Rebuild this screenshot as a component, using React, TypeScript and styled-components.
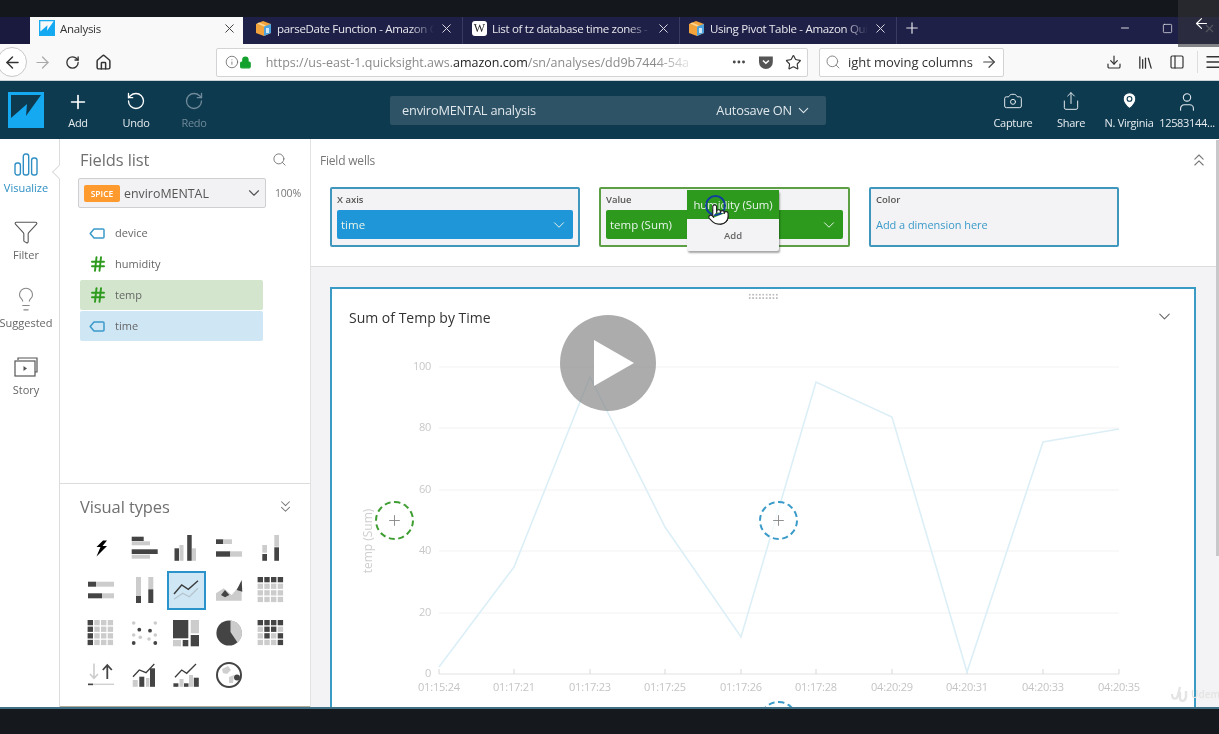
import React from 'react';
import styled, { createGlobalStyle } from 'styled-components';
import {
  ArrowLeft,
  ArrowRight,
  Camera,
  ChevronDown,
  ChevronsDown,
  ChevronsUp,
  Download,
  Ellipsis,
  Funnel,
  Hash,
  House,
  Info,
  Library,
  Lightbulb,
  Lock,
  MapPin,
  Menu,
  Minus,
  PanelLeft,
  Plus,
  Pointer,
  RotateCcw,
  RotateCw,
  Search,
  Share,
  Square,
  Star,
  User,
  X,
} from 'lucide-react';

const FONT = '"Open Sans", "Noto Sans", sans-serif';
const DARK = '#444';
const LIGHT = '#ccc';

const GlobalStyle = createGlobalStyle`
  html, body {
    margin: 0;
    padding: 0;
    background: #15191e;
    overflow: hidden;
  }
  * {
    box-sizing: border-box;
  }
`;

type Block = [number, number, number, number, string];

const blocks = (list: Block[]) =>
  list.map(([x, y, w, h, fill], i) => <rect key={i} x={x} y={y} width={w} height={h} fill={fill} />);

const gridCells = (pattern: string[]) => {
  const list: Block[] = [];
  pattern.forEach((row, r) => {
    row.split('').forEach((c, k) => {
      list.push([-13.4 + k * 6.7, -13 + r * 6.6, 5.4, 5.3, c === 'd' ? DARK : LIGHT]);
    });
  });
  return blocks(list);
};

const visualIcons: React.ReactNode[] = [
  <path d="M2 -7.5 L-4.5 -1 L-0.5 -1 L-4.5 8.5 L6 -2 L1.5 -2 L6 -7.5Z" fill="#000" />,
  blocks([
    [-12.3, -11.3, 12, 4.3, DARK],
    [-12.3, -6.7, 18.3, 4, LIGHT],
    [-12.3, 1.3, 26, 4.7, DARK],
    [-12.3, 6.7, 18.3, 4, LIGHT],
  ]),
  blocks([
    [-11.5, 0.3, 4.5, 12.5, DARK],
    [-6.5, -3, 4, 15.8, LIGHT],
    [1.2, -13, 4.5, 25.8, DARK],
    [6, 0.3, 4, 12.5, LIGHT],
  ]),
  blocks([
    [-13, -8.7, 7.3, 4.7, DARK],
    [-5.7, -8.7, 8.7, 4.7, LIGHT],
    [-13, 3.3, 14.3, 5.4, DARK],
    [1.3, 3.3, 11.7, 5.4, LIGHT],
  ]),
  blocks([
    [-8.7, -3, 4.7, 7.7, LIGHT],
    [-8.7, 6, 4.7, 6.8, DARK],
    [3.3, -13, 4.7, 11.7, LIGHT],
    [3.3, -0.7, 4.7, 13.5, DARK],
  ]),
  blocks([
    [-13, -8.3, 8, 5, DARK],
    [-5, -8.3, 18, 5, LIGHT],
    [-13, 3.3, 14, 5, DARK],
    [1, 3.3, 12, 5, LIGHT],
  ]),
  blocks([
    [-8, -13, 5, 19, LIGHT],
    [-8, 6, 5, 7, DARK],
    [4.3, -13, 5, 12.3, LIGHT],
    [4.3, -0.7, 5, 13.7, DARK],
  ]),
  <>
    <polyline points="-12,9.3 -3.3,3.3 3.3,6.7 12,-1.7" fill="none" stroke="#b5c4cc" strokeWidth="1.2" />
    <polyline points="-12,4 -4.3,-5 2.3,-0.7 12,-9.3" fill="none" stroke="#3c3c3c" strokeWidth="1.4" />
  </>,
  <>
    <polygon points="-13,10.7 -13,3.3 -5.3,-1.7 2.7,5 12.7,-6.7 12.7,10.7" fill={LIGHT} />
    <polygon points="-8,5 -4,0 0.3,5 -4,7.3" fill={DARK} />
    <polygon points="7.7,0 12.7,-10 13.3,1.7" fill={DARK} />
  </>,
  gridCells(['dddd', 'llll', 'llll', 'llll']),
  gridCells(['dlll', 'dlll', 'dlll', 'dlll']),
  <>
    {[[-4.7, -3.3], [6, -2.3], [-10.3, 10], [11.3, 10]].map(([x, y], i) => (
      <circle key={i} cx={x} cy={y} r="1.9" fill={DARK} />
    ))}
    {[[-10.3, -10], [11.3, -10], [-3.7, 4.3], [5, 6], [-10.3, 2], [11.3, 2]].map(([x, y], i) => (
      <circle key={i} cx={x} cy={y} r="1.8" fill={LIGHT} />
    ))}
  </>,
  blocks([
    [-13, -13, 15.3, 18.3, DARK],
    [4.7, -13, 8.3, 13.3, LIGHT],
    [4.7, 2, 8.3, 11.3, DARK],
    [-13, 7, 8, 6.3, LIGHT],
    [-3.3, 7, 5.6, 6.3, DARK],
  ]),
  <>
    <circle cx="0" cy="0" r="12.6" fill={DARK} />
    <path d="M1.5 -1 L1.5 -12.6 A12.6 12.6 0 0 1 8.5 9.5 Z" fill={LIGHT} />
  </>,
  gridCells(['dddd', 'lddl', 'ldld', 'llld']),
  <>
    <path d="M-7 -11.5 V3 M-11 -1 L-7 3.4 L-3 -1" fill="none" stroke={LIGHT} strokeWidth="1.6" />
    <path d="M6.3 4 V-10 M1.8 -5 L6.3 -10 L10.8 -5" fill="none" stroke={DARK} strokeWidth="1.8" />
    {blocks([
      [-13, 8.6, 26, 1.3, LIGHT],
      [-13, 8.6, 5, 1.6, DARK],
    ])}
  </>,
  <>
    {blocks([
      [-11.3, 5, 5, 6.8, LIGHT],
      [-4.7, 1.7, 5, 10.1, DARK],
      [2, 3, 3.4, 8.8, LIGHT],
      [6, -6.7, 5, 18.5, DARK],
    ])}
    <polyline points="-11,1.7 -4.7,-5 2,-2.3 10.3,-11" fill="none" stroke="#3c3c3c" strokeWidth="1.3" />
  </>,
  <>
    {blocks([
      [-12.6, 8.3, 5, 3.5, DARK],
      [-6.5, 4, 4, 7.8, LIGHT],
      [-2, 8.3, 4.5, 3.5, DARK],
      [3, 0, 4, 11.8, LIGHT],
      [7.8, 2.7, 5, 9.1, DARK],
    ])}
    <polyline points="-11,2.3 -4.3,-5 0.7,-1.7 10,-11" fill="none" stroke="#3c3c3c" strokeWidth="1.3" />
  </>,
  <>
    <path d="M-7 -6 L-1 -9 L2 -5 L-2 -1 L-6 -2Z M0 2 L5 0 L4 8 L0 8Z" fill="#cfcfcf" />
    <circle cx="0" cy="0" r="12" fill="none" stroke={DARK} strokeWidth="2" />
    <circle cx="8" cy="2.5" r="3" fill={DARK} />
  </>,
];

const CUBE = (
  <svg width="17" height="17" viewBox="0 0 17 17">
    <path d="M1 4 L8 1 L16 4 L16 13 L9 16 L1 13Z" fill="#f2a33c" />
    <path d="M9 6.5 L16 4 L16 13 L9 16Z" fill="#4da3dd" />
    <path d="M4 2.6 L11 5.4 L9 6.5 L2 3.6Z" fill="#fbd694" />
    <rect x="11" y="8" width="3" height="5" fill="#cfe8f8" />
  </svg>
);

const QS_MARK = (size: number, border: string, dark: string) => (
  <svg width={size} height={size} viewBox="0 0 36 36">
    <rect x="0.5" y="0.5" width="35" height="35" rx="1" fill="#14a9f0" />
    <path d="M3 3 H33 L18 24 L19 12 L3 26Z" fill={dark} />
    <rect x="1" y="1" width="34" height="34" fill="none" stroke={border} strokeWidth="2" />
  </svg>
);

const TagIcon = () => (
  <svg width="16" height="11" viewBox="0 0 16 11">
    <path
      d="M5 1H14a1 1 0 0 1 1 1V9a1 1 0 0 1-1 1H5L1.2 5.5Z"
      fill="none"
      stroke="#3b9ac9"
      strokeWidth="1.5"
      strokeLinejoin="round"
    />
  </svg>
);

const VisualizeIcon = () => (
  <svg width="24" height="23" viewBox="0 0 24 23" fill="none" stroke="#2f8fc4" strokeWidth="1.4">
    <rect x="1" y="10" width="5.4" height="12" rx="2.2" />
    <rect x="9.3" y="1" width="5.4" height="21" rx="2.2" />
    <rect x="17.6" y="5" width="5.4" height="17" rx="2.2" />
  </svg>
);

const StoryIcon = () => (
  <svg width="24" height="20" viewBox="0 0 24 20" fill="none" stroke="#555" strokeWidth="1.2">
    <path d="M4 3 V1 H23 V15 H21" />
    <rect x="1" y="4" width="20" height="15" />
    <path d="M9.5 9 L13 11.5 L9.5 14Z" fill="#555" stroke="none" />
  </svg>
);

const CHART_X = [439, 514, 590, 665, 741, 816, 892, 967, 1043, 1119];
const CHART_LABELS = [
  '01:15:24',
  '01:17:21',
  '01:17:23',
  '01:17:25',
  '01:17:26',
  '01:17:28',
  '04:20:29',
  '04:20:31',
  '04:20:33',
  '04:20:35',
];
const CHART_Y = [667, 567, 377, 527, 637, 382, 417, 672, 442, 429];
const GRID = [
  { y: 367, label: '100' },
  { y: 428, label: '80' },
  { y: 490, label: '60' },
  { y: 551, label: '40' },
  { y: 613, label: '20' },
  { y: 674, label: '0' },
];

const LineChart = () => (
  <ChartSvg viewBox="332 340 862 367">
    {GRID.map((g) => (
      <g key={g.y}>
        {g.y !== 674 && <line x1="439" x2="1119" y1={g.y} y2={g.y} stroke="#f2f2f4" strokeWidth="1" />}
        <text x="431" y={g.y + 3} textAnchor="end" fontSize="11" letterSpacing="-0.3" fill="#c8c8c8" fontFamily={FONT}>
          {g.label}
        </text>
      </g>
    ))}
    <line x1="439" x2="1119" y1="674" y2="674" stroke="#e2e2e4" strokeWidth="1" />
    {CHART_X.map((x, i) => (
      <g key={x}>
        <line x1={x} x2={x} y1="669" y2="674" stroke="#d8d8da" strokeWidth="1" />
        <text x={x} y="691" textAnchor="middle" fontSize="11" letterSpacing="-0.2" fill="#c4c4c4" fontFamily={FONT}>
          {CHART_LABELS[i]}
        </text>
      </g>
    ))}
    <polyline
      points={CHART_X.map((x, i) => `${x},${CHART_Y[i]}`).join(' ')}
      fill="none"
      stroke="#dceff7"
      strokeWidth="1.6"
    />
    <text
      transform="translate(372 541) rotate(-90)"
      textAnchor="middle"
      fontSize="12"
      fill="#cfcfcf"
      fontFamily={FONT}
    >
      temp (Sum)
    </text>
  </ChartSvg>
);

const tabs = [
  { title: 'parseDate Function - Amazon Quick', wiki: false, width: 220, pad: 12 },
  { title: 'List of tz database time zones - Wikipedia', wiki: true, width: 217, pad: 9 },
  { title: 'Using Pivot Table - Amazon QuickSight', wiki: false, width: 217, pad: 8 },
];

const fields = [
  { name: 'device', kind: 'tag', tone: 'none' },
  { name: 'humidity', kind: 'hash', tone: 'none' },
  { name: 'temp', kind: 'hash', tone: 'green' },
  { name: 'time', kind: 'tag', tone: 'blue' },
] as const;

const App: React.FC = () => {
  return (
    <Page>
      <GlobalStyle />
      <TopStrip />
      <TabBar>
        <TabLead />
        <ActiveTab>
          {QS_MARK(16, '#14a9f0', '#f9f9fa')}
          <ActiveTabTitle>Analysis</ActiveTabTitle>
          <X size={15} color="#444" strokeWidth={1.6} />
        </ActiveTab>
        {tabs.map((t) => (
          <Tab key={t.title} $width={t.width} $pad={t.pad}>
            {t.wiki ? <WikiIcon>W</WikiIcon> : CUBE}
            <TabTitle>{t.title}</TabTitle>
            <X size={15} color="#d8d8e0" strokeWidth={1.6} />
          </Tab>
        ))}
        <NewTab>
          <Plus size={18} color="#e4e4ea" strokeWidth={1.6} />
        </NewTab>
        <WindowControls>
          <Minus size={12} color="#d8d8e0" />
          <Square size={11} color="#e8e8ee" strokeWidth={1.6} />
          <X size={13} color="#8a8a95" />
        </WindowControls>
      </TabBar>
      <NavBar>
        <BackCircle>
          <ArrowLeft size={19} color="#333" strokeWidth={1.8} />
        </BackCircle>
        <NavButton>
          <ArrowRight size={19} color="#aaa" strokeWidth={1.5} />
        </NavButton>
        <NavButton>
          <RotateCw size={15} color="#333" strokeWidth={2.1} />
        </NavButton>
        <NavButton>
          <House size={17} color="#333" strokeWidth={2.1} />
        </NavButton>
        <UrlBar>
          <Info size={14} color="#666" strokeWidth={1.4} />
          <Lock size={13} color="#12a12c" fill="#12a12c" strokeWidth={2} />
          <UrlText>
            https://us-east-1.quicksight.aws.<b>amazon.com</b>/sn/analyses/dd9b7444-54a
          </UrlText>
          <Ellipsis size={16} color="#444" strokeWidth={2.4} />
          <PocketIcon viewBox="0 0 16 16">
            <path d="M1 2.5h14v5.5a7 7 0 0 1-14 0Z" fill="#555" />
            <path d="M5 6.5l3 2.8 3-2.8" fill="none" stroke="#fff" strokeWidth="1.6" />
          </PocketIcon>
          <Star size={17} color="#333" strokeWidth={1.6} />
        </UrlBar>
        <SearchBar>
          <Search size={16} color="#888" strokeWidth={1.5} />
          <SearchText>ight moving columns</SearchText>
          <ArrowRight size={18} color="#444" strokeWidth={1.6} />
        </SearchBar>
        <ToolGroup>
          <Download size={16} color="#333" strokeWidth={1.8} />
          <Library size={17} color="#333" strokeWidth={1.8} />
          <PanelLeft size={16} color="#333" strokeWidth={1.8} />
          <ToolDivider />
          <Menu size={18} color="#333" strokeWidth={1.8} />
        </ToolGroup>
      </NavBar>
      <AppBar>
        <LogoSlot>{QS_MARK(36, '#14a9f0', '#0e3a50')}</LogoSlot>
        <Action>
          <Plus size={22} color="#fff" strokeWidth={1.8} />
          Add
        </Action>
        <Action>
          <RotateCcw size={20} color="#fff" strokeWidth={1.6} />
          Undo
        </Action>
        <Action $muted>
          <RotateCw size={20} color="#6f8a98" strokeWidth={1.6} />
          Redo
        </Action>
        <TitleBar>
          <span>enviroMENTAL analysis</span>
          <Autosave>
            Autosave ON
            <ChevronDown size={17} strokeWidth={1.5} />
          </Autosave>
        </TitleBar>
        <RightActions>
          <Action $wide>
            <Camera size={20} color="#dfe7eb" strokeWidth={1.2} />
            Capture
          </Action>
          <Action $wide>
            <Share size={20} color="#dfe7eb" strokeWidth={1.2} />
            Share
          </Action>
          <Action $wide>
            <MapPin size={19} color="#0e3a50" fill="#fff" strokeWidth={1.4} />
            N. Virginia
          </Action>
          <Action $wide>
            <User size={22} color="#dfe7eb" strokeWidth={1.2} />
            12583144...
          </Action>
        </RightActions>
      </AppBar>
      <Workspace>
        <Rail>
          <RailNotch />
          <RailItem $active>
            <RailIcon>
              <VisualizeIcon />
            </RailIcon>
            Visualize
          </RailItem>
          <RailItem>
            <RailIcon>
              <Funnel size={26} color="#555" strokeWidth={1} />
            </RailIcon>
            Filter
          </RailItem>
          <RailItem>
            <RailIcon>
              <Lightbulb size={26} color="#888" strokeWidth={1} />
            </RailIcon>
            Suggested
          </RailItem>
          <RailItem>
            <RailIcon>
              <StoryIcon />
            </RailIcon>
            Story
          </RailItem>
        </Rail>
        <SidePanel>
          <FieldsSection>
            <PanelHead>
              <PanelTitle>Fields list</PanelTitle>
              <Search size={15} color="#777" strokeWidth={1.5} />
            </PanelHead>
            <DatasetRow>
              <DatasetSelect>
                <SpiceBadge>SPICE</SpiceBadge>
                <DatasetName>enviroMENTAL</DatasetName>
                <ChevronDown size={18} color="#555" strokeWidth={1.5} />
              </DatasetSelect>
              <Percent>100%</Percent>
            </DatasetRow>
            <FieldList>
              {fields.map((f) => (
                <FieldRow key={f.name} $tone={f.tone}>
                  <FieldIcon>
                    {f.kind === 'tag' ? <TagIcon /> : <Hash size={18} color="#2e9a1e" strokeWidth={2.6} />}
                  </FieldIcon>
                  {f.name}
                </FieldRow>
              ))}
            </FieldList>
          </FieldsSection>
          <VisualSection>
            <VisualHead>
              <PanelTitle>Visual types</PanelTitle>
              <ChevronsDown size={19} color="#777" strokeWidth={1.3} />
            </VisualHead>
            <VisualGrid>
              {visualIcons.map((icon, i) => (
                <VisualCell key={i} $selected={i === 7}>
                  <svg width="32" height="32" viewBox="-16 -16 32 32">
                    {icon}
                  </svg>
                </VisualCell>
              ))}
            </VisualGrid>
          </VisualSection>
        </SidePanel>
        <Main>
          <ScrollThumb />
          <FieldWells>
            <WellsHead>
              Field wells
              <ChevronsUp size={20} color="#777" strokeWidth={1.3} />
            </WellsHead>
            <WellRow>
              <Well $color="#3f97bd" $width={250}>
                <WellLabel>X axis</WellLabel>
                <WellPill $color="#1f96d8">
                  time
                  <ChevronDown size={18} strokeWidth={1.3} />
                </WellPill>
              </Well>
              <Well $color="#5c9f45" $width={251}>
                <WellLabel>Value</WellLabel>
                <WellPill $color="#2d9a1e">
                  temp (Sum)
                  <ChevronDown size={18} strokeWidth={1.3} />
                </WellPill>
                <DragPopup>
                  <PopupTitle>humidity (Sum)</PopupTitle>
                  <PopupAction>Add</PopupAction>
                  <CursorRing />
                  <CursorHand>
                    <Pointer size={23} color="#222" fill="#fff" strokeWidth={1.2} />
                  </CursorHand>
                </DragPopup>
              </Well>
              <Well $color="#3f97bd" $width={250}>
                <WellLabel>Color</WellLabel>
                <WellHint>Add a dimension here</WellHint>
              </Well>
            </WellRow>
          </FieldWells>
          <Canvas>
            <Card>
              <DragHandle />
              <CardHead>
                Sum of Temp by Time
                <CardMenu>
                  <ChevronDown size={19} color="#666" strokeWidth={1.3} />
                </CardMenu>
              </CardHead>
              <LineChart />
              <DropTarget $color="#3f9e32" $left={43} $top={212}>
                <Plus size={17} color="#888" strokeWidth={1.3} />
              </DropTarget>
              <DropTarget $color="#3a9bc9" $left={427} $top={212}>
                <Plus size={17} color="#888" strokeWidth={1.3} />
              </DropTarget>
              <DropTarget $color="#3a9bc9" $left={427} $top={412} />
            </Card>
          </Canvas>
        </Main>
      </Workspace>
      <Footer />
      <Watermark>
        <svg width="18" height="20" viewBox="0 0 18 20" fill="none" stroke="#e4e4e4" strokeWidth="2.4">
          <path d="M2 10 C2 16 7 16 8 11 L10 3 M10 8 V14 C10 18 15 18 16 13 V7" />
        </svg>
        Udemy
      </Watermark>
      <PlayOverlay>
        <svg width="40" height="46" viewBox="0 0 40 46">
          <polygon points="0,0 40,23 0,46" fill="#fff" />
        </svg>
      </PlayOverlay>
      <BackOverlay>
        <ArrowLeft size={17} color="#fff" strokeWidth={1.6} />
      </BackOverlay>
    </Page>
  );
};

export default App;

const Page = styled.div`
  position: relative;
  width: 1219px;
  height: 734px;
  display: flex;
  flex-direction: column;
  overflow: hidden;
  font-family: ${FONT};
  filter: blur(0.35px);
`;

const TopStrip = styled.div`
  height: 17px;
  flex: none;
  background: #14171c;
`;

const TabBar = styled.div`
  height: 27px;
  flex: none;
  display: flex;
  background: #1f2048;
`;

const TabLead = styled.div`
  width: 30px;
  background: #191a3e;
`;

const ActiveTab = styled.div`
  width: 213px;
  display: flex;
  align-items: center;
  padding: 0 6px 5px 9px;
  background: #f9f9fa;
`;

const ActiveTabTitle = styled.span`
  flex: 1;
  margin-left: 5px;
  font-size: 11.5px;
  letter-spacing: -0.3px;
  color: #333;
`;

const Tab = styled.div<{ $width: number; $pad: number }>`
  width: ${(p) => p.$width}px;
  display: flex;
  align-items: center;
  gap: 5px;
  padding: 0 8px 5px ${(p) => p.$pad}px;
  border-right: 1px solid #3a3b60;
  color: #e8e8ee;
`;

const TabTitle = styled.span`
  flex: 1;
  min-width: 0;
  font-size: 11.5px;
  letter-spacing: -0.3px;
  white-space: nowrap;
  overflow: hidden;
  mask-image: linear-gradient(to right, #000 85%, transparent 100%);
`;

const WikiIcon = styled.span`
  width: 15px;
  height: 15px;
  flex: none;
  display: flex;
  align-items: center;
  justify-content: center;
  border-radius: 3px;
  background: #fff;
  color: #222;
  font-family: 'Liberation Serif', serif;
  font-size: 12px;
`;

const NewTab = styled.div`
  width: 30px;
  padding-bottom: 5px;
  display: flex;
  align-items: center;
  justify-content: center;
`;

const WindowControls = styled.div`
  margin-left: auto;
  width: 100px;
  padding: 0 3px 5px 0;
  display: flex;
  align-items: center;
  justify-content: space-between;
`;

const NavBar = styled.div`
  height: 37px;
  flex: none;
  display: flex;
  align-items: center;
  background: #f9f9fa;
  border-bottom: 1px solid #c9d3d8;
`;

const BackCircle = styled.div`
  width: 30px;
  height: 30px;
  flex: none;
  margin-left: -3px;
  display: flex;
  align-items: center;
  justify-content: center;
  border-radius: 50%;
  background: #fff;
  border: 1px solid #c8c8c8;
`;

const NavButton = styled.div`
  width: 30.5px;
  flex: none;
  display: flex;
  justify-content: center;
`;

const UrlBar = styled.div`
  width: 592px;
  height: 29px;
  flex: none;
  margin-left: 97.5px;
  display: flex;
  align-items: center;
  padding: 0 5px 0 8px;
  background: #fff;
  border: 1px solid #d4d4d6;
  border-radius: 2px;
`;

const UrlText = styled.span`
  width: 432px;
  flex: none;
  margin: 0 33px 0 14px;
  font-size: 12.5px;
  color: #8a8a8a;
  white-space: nowrap;
  overflow: hidden;
  mask-image: linear-gradient(to right, #000 90%, transparent 100%);

  b {
    font-weight: 400;
    color: #222;
  }
`;

const PocketIcon = styled.svg`
  width: 16px;
  height: 16px;
  margin: 0 11px 0 12px;
`;

const SearchBar = styled.div`
  width: 185px;
  height: 29px;
  flex: none;
  margin-left: 11px;
  display: flex;
  align-items: center;
  padding: 0 5px;
  background: #fff;
  border: 1px solid #d4d4d6;
  border-radius: 2px;
`;

const SearchText = styled.span`
  flex: 1;
  margin-left: 7px;
  font-size: 13px;
  letter-spacing: -0.05px;
  color: #333;
  white-space: nowrap;
`;

const ToolGroup = styled.div`
  margin-left: 102px;
  flex: none;
  display: flex;
  align-items: center;
  gap: 15px;
`;

const ToolDivider = styled.div`
  width: 1px;
  height: 22px;
  margin: 0 -9px 0 -3px;
  background: #ddd;
`;

const AppBar = styled.div`
  height: 58px;
  flex: none;
  display: flex;
  align-items: center;
  background: #0e3a50;
`;

const LogoSlot = styled.div`
  width: 36px;
  height: 36px;
  margin: 0 8px;
`;

const Action = styled.div<{ $muted?: boolean; $wide?: boolean }>`
  width: ${(p) => (p.$wide ? '58px' : '52px')};
  margin-right: ${(p) => (p.$wide ? '0' : '6px')};
  height: 39px;
  display: flex;
  flex-direction: column;
  align-items: center;
  justify-content: space-between;
  white-space: nowrap;
  font-size: 11px;
  letter-spacing: -0.3px;
  color: ${(p) => (p.$muted ? '#6f8a98' : '#e6edf0')};
`;

const TitleBar = styled.div`
  width: 436px;
  height: 29px;
  margin-left: 164px;
  display: flex;
  align-items: center;
  justify-content: space-between;
  padding: 0 12px;
  border-radius: 2px;
  background: #2e5266;
  color: #dfe7eb;
  font-size: 12.8px;
  letter-spacing: -0.2px;
`;

const Autosave = styled.span`
  display: flex;
  align-items: center;
  gap: 3px;
  margin-right: 2px;
`;

const RightActions = styled.div`
  margin-left: auto;
  padding-right: 3px;
  display: flex;
`;

const Workspace = styled.div`
  flex: 1;
  min-height: 0;
  display: flex;
  background: #fff;
`;

const Rail = styled.div`
  position: relative;
  width: 60px;
  flex: none;
  padding: 12px 7px 0 0;
  border-right: 1px solid #dcdcdc;
  background: #fff;
`;

const RailNotch = styled.div`
  position: absolute;
  top: 28px;
  right: -5px;
  width: 10px;
  height: 10px;
  transform: rotate(45deg);
  background: #fff;
  border-left: 1px solid #dcdcdc;
  border-bottom: 1px solid #dcdcdc;
`;

const RailItem = styled.div<{ $active?: boolean }>`
  height: 67.5px;
  display: flex;
  flex-direction: column;
  align-items: center;
  font-size: 11px;
  line-height: 14px;
  white-space: nowrap;
  color: ${(p) => (p.$active ? '#2f8fc4' : '#666')};
`;

const RailIcon = styled.div`
  height: 26px;
  margin-bottom: 3.5px;
  display: flex;
  align-items: center;
`;

const SidePanel = styled.div`
  width: 250px;
  flex: none;
  display: flex;
  flex-direction: column;
`;

const FieldsSection = styled.div`
  flex: 1;
  padding: 0 0 0 18px;
`;

const PanelHead = styled.div`
  height: 39px;
  display: flex;
  align-items: center;
  justify-content: space-between;
  padding: 2px 23px 0 2px;
`;

const PanelTitle = styled.span`
  font-size: 16.5px;
  letter-spacing: -0.1px;
  color: #707070;
`;

const DatasetRow = styled.div`
  display: flex;
  align-items: center;
`;

const DatasetSelect = styled.div`
  width: 188px;
  height: 30px;
  display: flex;
  align-items: center;
  padding: 0 2px 0 5px;
  background: #f2f2f4;
  border: 1px solid #cfcfd2;
  border-radius: 2px;
`;

const SpiceBadge = styled.span`
  width: 36px;
  height: 17px;
  display: flex;
  align-items: center;
  justify-content: center;
  border-radius: 2px;
  background: #ff9a2e;
  color: #fff;
  font-size: 8.5px;
  font-weight: 600;
`;

const DatasetName = styled.span`
  flex: 1;
  margin-left: 4px;
  font-size: 12.4px;
  color: #555;
`;

const Percent = styled.span`
  margin-left: 9px;
  font-size: 10.5px;
  letter-spacing: -0.2px;
  color: #777;
`;

const FieldList = styled.div`
  width: 183px;
  margin: 10px 0 0 2px;
  display: flex;
  flex-direction: column;
  gap: 1px;
`;

const FieldRow = styled.div<{ $tone: 'none' | 'green' | 'blue' }>`
  height: 30px;
  display: flex;
  align-items: center;
  border-radius: 2px;
  font-size: 11px;
  line-height: 28px;
  color: #666;
  background: ${(p) => (p.$tone === 'green' ? '#d3e6cd' : p.$tone === 'blue' ? '#cfe6f5' : 'transparent')};
`;

const FieldIcon = styled.span`
  width: 35px;
  padding-left: 9px;
  display: flex;
  align-items: center;
`;

const VisualSection = styled.div`
  height: 224px;
  flex: none;
  padding: 0 0 0 20px;
  border-top: 1px solid #dcdcdc;
`;

const VisualHead = styled.div`
  height: 43px;
  display: flex;
  align-items: center;
  justify-content: space-between;
  padding: 2px 15px 0 0;
`;

const VisualGrid = styled.div`
  display: grid;
  grid-template-columns: repeat(5, 42.5px);
  grid-auto-rows: 42.3px;
`;

const VisualCell = styled.div<{ $selected?: boolean }>`
  display: flex;
  align-items: center;
  justify-content: center;
  ${(p) => p.$selected && 'background: #cfe6f5; border: 2px solid #2a93c9; margin: 2px;'}
`;

const Main = styled.div`
  position: relative;
  flex: 1;
  min-width: 0;
  display: flex;
  flex-direction: column;
  border-left: 1px solid #e2e2e2;
`;

const ScrollThumb = styled.div`
  position: absolute;
  top: 1px;
  right: 0;
  width: 3px;
  height: 416px;
  background: #c8c8ca;
  z-index: 3;
`;

const FieldWells = styled.div`
  height: 128px;
  flex: none;
  padding: 0 0 0 9px;
  background: #fff;
  border-bottom: 1px solid #dcdcdc;
`;

const WellsHead = styled.div`
  height: 48px;
  display: flex;
  align-items: center;
  justify-content: space-between;
  padding: 0 10px 6px 0;
  font-size: 12px;
  letter-spacing: -0.2px;
  color: #777;
`;

const WellRow = styled.div`
  display: flex;
  gap: 19px;
  padding-left: 10px;
`;

const Well = styled.div<{ $color: string; $width: number }>`
  position: relative;
  width: ${(p) => p.$width}px;
  height: 60px;
  padding: 4px 5px 0;
  background: #f3f3f5;
  border: 2px solid ${(p) => p.$color};
  border-radius: 2px;
`;

const WellLabel = styled.div`
  height: 17px;
  font-size: 9.5px;
  font-weight: 600;
  color: #555;
`;

const WellPill = styled.div<{ $color: string }>`
  height: 29px;
  display: flex;
  align-items: center;
  justify-content: space-between;
  padding: 0 5px 0 4px;
  border-radius: 2px;
  background: ${(p) => p.$color};
  color: #e8f4ea;
  font-size: 11.5px;
`;

const WellHint = styled.div`
  margin-top: 7px;
  color: #3b9ac9;
  font-size: 11px;
  letter-spacing: -0.05px;
`;

const DragPopup = styled.div`
  position: absolute;
  left: 86px;
  top: 1px;
  width: 92px;
  height: 61px;
  background: #f3f3f5;
  border-radius: 2px;
  box-shadow: 1px 2px 2px rgba(0, 0, 0, 0.35);
`;

const PopupTitle = styled.div`
  height: 29px;
  display: flex;
  align-items: center;
  justify-content: center;
  background: #2d9a1e;
  color: #e8f4ea;
  font-size: 11.4px;
  letter-spacing: -0.1px;
  white-space: nowrap;
`;

const PopupAction = styled.div`
  height: 32px;
  display: flex;
  align-items: center;
  justify-content: center;
  font-size: 9.5px;
  font-weight: 600;
  color: #666;
`;

const CursorRing = styled.div`
  position: absolute;
  left: 18px;
  top: 5px;
  width: 21px;
  height: 21px;
  border: 2.5px solid #123f9c;
  border-radius: 50%;
`;

const CursorHand = styled.div`
  position: absolute;
  left: 20px;
  top: 13px;
  line-height: 0;
`;

const Canvas = styled.div`
  flex: 1;
  min-height: 0;
  display: flex;
  padding: 20px 23px 0 19px;
  background: #f3f3f5;
`;

const Card = styled.div`
  position: relative;
  flex: 1;
  min-width: 0;
  overflow: hidden;
  display: flex;
  flex-direction: column;
  background: #fff;
  border: 2px solid #3a9bc4;
  border-bottom: none;
`;

const DragHandle = styled.div`
  position: absolute;
  top: 4px;
  left: 50%;
  width: 30px;
  height: 7px;
  transform: translateX(-50%);
  background-image: radial-gradient(circle, #bbb 1px, transparent 1.2px);
  background-size: 3.4px 3.4px;
`;

const CardHead = styled.div`
  height: 51px;
  flex: none;
  display: flex;
  align-items: center;
  justify-content: space-between;
  padding: 6px 20px 0 17px;
  font-size: 14px;
  color: #333;
`;

const CardMenu = styled.span`
  display: flex;
  margin-top: -3px;
`;

const ChartSvg = styled.svg`
  width: 862px;
  height: 367px;
  flex: none;
  display: block;
`;

const DropTarget = styled.div<{ $color: string; $left: number; $top: number }>`
  position: absolute;
  left: ${(p) => p.$left}px;
  top: ${(p) => p.$top}px;
  width: 39px;
  height: 39px;
  display: flex;
  align-items: center;
  justify-content: center;
  border: 2px dashed ${(p) => p.$color};
  border-radius: 50%;
  background: rgba(255, 255, 255, 0.7);
`;

const Watermark = styled.div`
  position: absolute;
  left: 1170px;
  top: 684px;
  display: flex;
  align-items: center;
  gap: 3px;
  font-size: 10px;
  font-weight: 600;
  color: #e4e4e4;
  white-space: nowrap;
`;

const Footer = styled.div`
  height: 27px;
  flex: none;
  background: #15191e;
  border-top: 2px solid #3f6f84;
  box-shadow: 0 -1px 0 #b3ab96;
`;

const PlayOverlay = styled.div`
  position: absolute;
  left: 560px;
  top: 315px;
  width: 96px;
  height: 96px;
  display: flex;
  align-items: center;
  justify-content: center;
  padding-left: 12px;
  border-radius: 50%;
  background: rgba(140, 140, 140, 0.72);
`;

const BackOverlay = styled.div`
  position: absolute;
  right: 0;
  top: 0;
  width: 41px;
  height: 47px;
  padding-left: 5px;
  display: flex;
  align-items: center;
  justify-content: center;
  background: rgba(50, 52, 56, 0.6);
`;
